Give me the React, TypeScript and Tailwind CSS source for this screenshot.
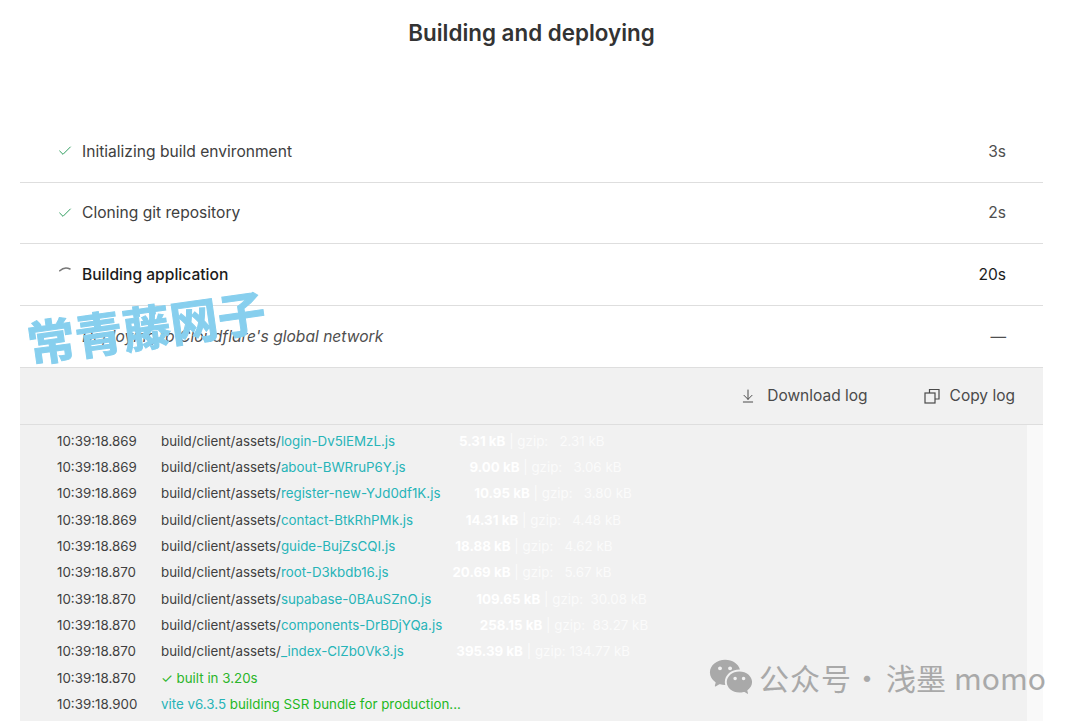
import { ArrowDownToLine, Check } from "lucide-react";
import { RiWechatFill } from "react-icons/ri";

const steps = [
  { label: "Initializing build environment", time: "3s", state: "done" },
  { label: "Cloning git repository", time: "2s", state: "done" },
  { label: "Building application", time: "20s", state: "active" },
  { label: "Deploying to Cloudflare's global network", time: "—", state: "pending" },
];

const assets = [
  { time: "10:39:18.869", name: "login-Dv5lEMzL.js", pad: 17, size: "5.31", gzip: "  2.31" },
  { time: "10:39:18.869", name: "about-BWRruP6Y.js", pad: 17, size: "9.00", gzip: "  3.06" },
  { time: "10:39:18.869", name: "register-new-YJd0df1K.js", pad: 9, size: "10.95", gzip: "  3.80" },
  { time: "10:39:18.869", name: "contact-BtkRhPMk.js", pad: 14, size: "14.31", gzip: "  4.48" },
  { time: "10:39:18.869", name: "guide-BujZsCQI.js", pad: 16, size: "18.88", gzip: "  4.62" },
  { time: "10:39:18.870", name: "root-D3kbdb16.js", pad: 17, size: "20.69", gzip: "  5.67" },
  { time: "10:39:18.870", name: "supabase-0BAuSZnO.js", pad: 12, size: "109.65", gzip: " 30.08" },
  { time: "10:39:18.870", name: "components-DrBDjYQa.js", pad: 10, size: "258.15", gzip: " 83.27" },
  { time: "10:39:18.870", name: "_index-ClZb0Vk3.js", pad: 14, size: "395.39", gzip: "134.77" },
];

function StepIcon({ state }: { state: string }) {
  if (state === "done") {
    return <Check className="w-4 h-4 text-[#2f9e5f]" strokeWidth={1.5} />;
  }
  if (state === "active") {
    return (
      <svg width="16" height="16" viewBox="0 0 16 16" fill="none" className="-mt-[7px]">
        <path d="M2.8 7.8 Q7.5 3.2 13 6" stroke="#777777" strokeWidth="1.6" strokeLinecap="round" />
      </svg>
    );
  }
  return <span className="w-4 h-4" />;
}

function Step({ label, time, state }: { label: string; time: string; state: string }) {
  return (
    <div className="flex items-center h-[61.7px] pl-[37px] pr-[37px] border-b border-[#dedede] text-[15.6px]">
      <StepIcon state={state} />
      <span
        className={
          "ml-[9px] flex-1 " +
          (state === "active"
            ? "font-medium text-[#1c1c1c]"
            : state === "pending"
              ? "italic text-[#4f4f4f]"
              : "text-[#404040]")
        }
      >
        {label}
      </span>
      <span className={state === "active" ? "text-[#1c1c1c]" : "text-[#4f4f4f]"}>{time}</span>
    </div>
  );
}

function LogRow({ time, children }: { time: string; children: React.ReactNode }) {
  return (
    <div className="flex h-[26.3px] items-center text-[13.35px] text-[#404040] whitespace-pre">
      <span className="w-[104px]">{time}</span>
      <span>{children}</span>
    </div>
  );
}

export default function App() {
  return (
    <div className="relative w-[1080px] h-[721px] overflow-hidden bg-white font-['Inter',sans-serif]">
      <h1 className="h-[121px] pt-[17px] ml-[20px] w-[1023px] text-center text-[22.4px] leading-[32px] font-semibold text-[#333333]">
        Building and deploying
      </h1>

      <div className="ml-[20px] w-[1023px]">
        {steps.map((s) => (
          <Step key={s.label} {...s} />
        ))}

        <div className="bg-[#f1f1f1]">
          <div className="flex items-center justify-end h-[57px] pr-[28px] border-b border-[#dedede] text-[15.5px] text-[#4a4a4a]">
            <button className="flex items-center gap-[11px]">
              <ArrowDownToLine className="w-4 h-4" strokeWidth={1.5} />
              Download log
            </button>
            <button className="flex items-center gap-[10px] ml-[56px]">
              <svg width="16" height="16" viewBox="0 0 16 16" fill="none" stroke="currentColor" strokeWidth="1.2">
                <rect x="1" y="5" width="10" height="10" />
                <path d="M5.5 5V1.5h9.5V11H11" />
              </svg>
              Copy log
            </button>
          </div>

          <div className="flex">
            <div className="flex-1 pl-[37px] pt-[3px] h-[300px]">
              {assets.map((a) => (
                <LogRow key={a.name} time={a.time}>
                  build/client/assets/<span className="text-[#27b4b8]">{a.name}</span>
                  {" ".repeat(a.pad)}
                  <span className="font-bold text-white">{a.size} kB</span>
                  <span className="text-[#fbfbfb]"> | gzip: {a.gzip} kB</span>
                </LogRow>
              ))}
              <LogRow time="10:39:18.870">
                <span className="text-[#2ab52a]">✓ built in 3.20s</span>
              </LogRow>
              <LogRow time="10:39:18.900">
                <span className="text-[#27b4b8]">vite v6.3.5</span>
                <span className="text-[#1fb81f]"> building SSR bundle for production...</span>
              </LogRow>
            </div>
            <div className="w-[16px] bg-[#f9f9f9]" />
          </div>
        </div>
      </div>

      {/* watermarks */}
      <div className="absolute left-[26px] top-[301px] -rotate-[8deg] text-[48px] leading-none font-bold text-[#87cfee] [-webkit-text-stroke:1px_#87cfee] font-['Noto_Sans_CJK_SC',sans-serif] whitespace-nowrap">
        常青藤网子
      </div>
      <div className="absolute left-[710px] top-[654px] flex items-center text-[#a9a9a9] font-['Noto_Sans_CJK_SC',sans-serif] text-[30px] leading-none whitespace-pre">
        <RiWechatFill className="w-[46px] h-[46px] mr-[5px] -ml-[2px]" />
        <span className="tracking-[1px]">公众号</span>
        <span className="w-[34px] pr-[6px] text-center">·</span>
        <span>浅墨</span>
        <span className="ml-[8px]">momo</span>
      </div>
    </div>
  );
}
